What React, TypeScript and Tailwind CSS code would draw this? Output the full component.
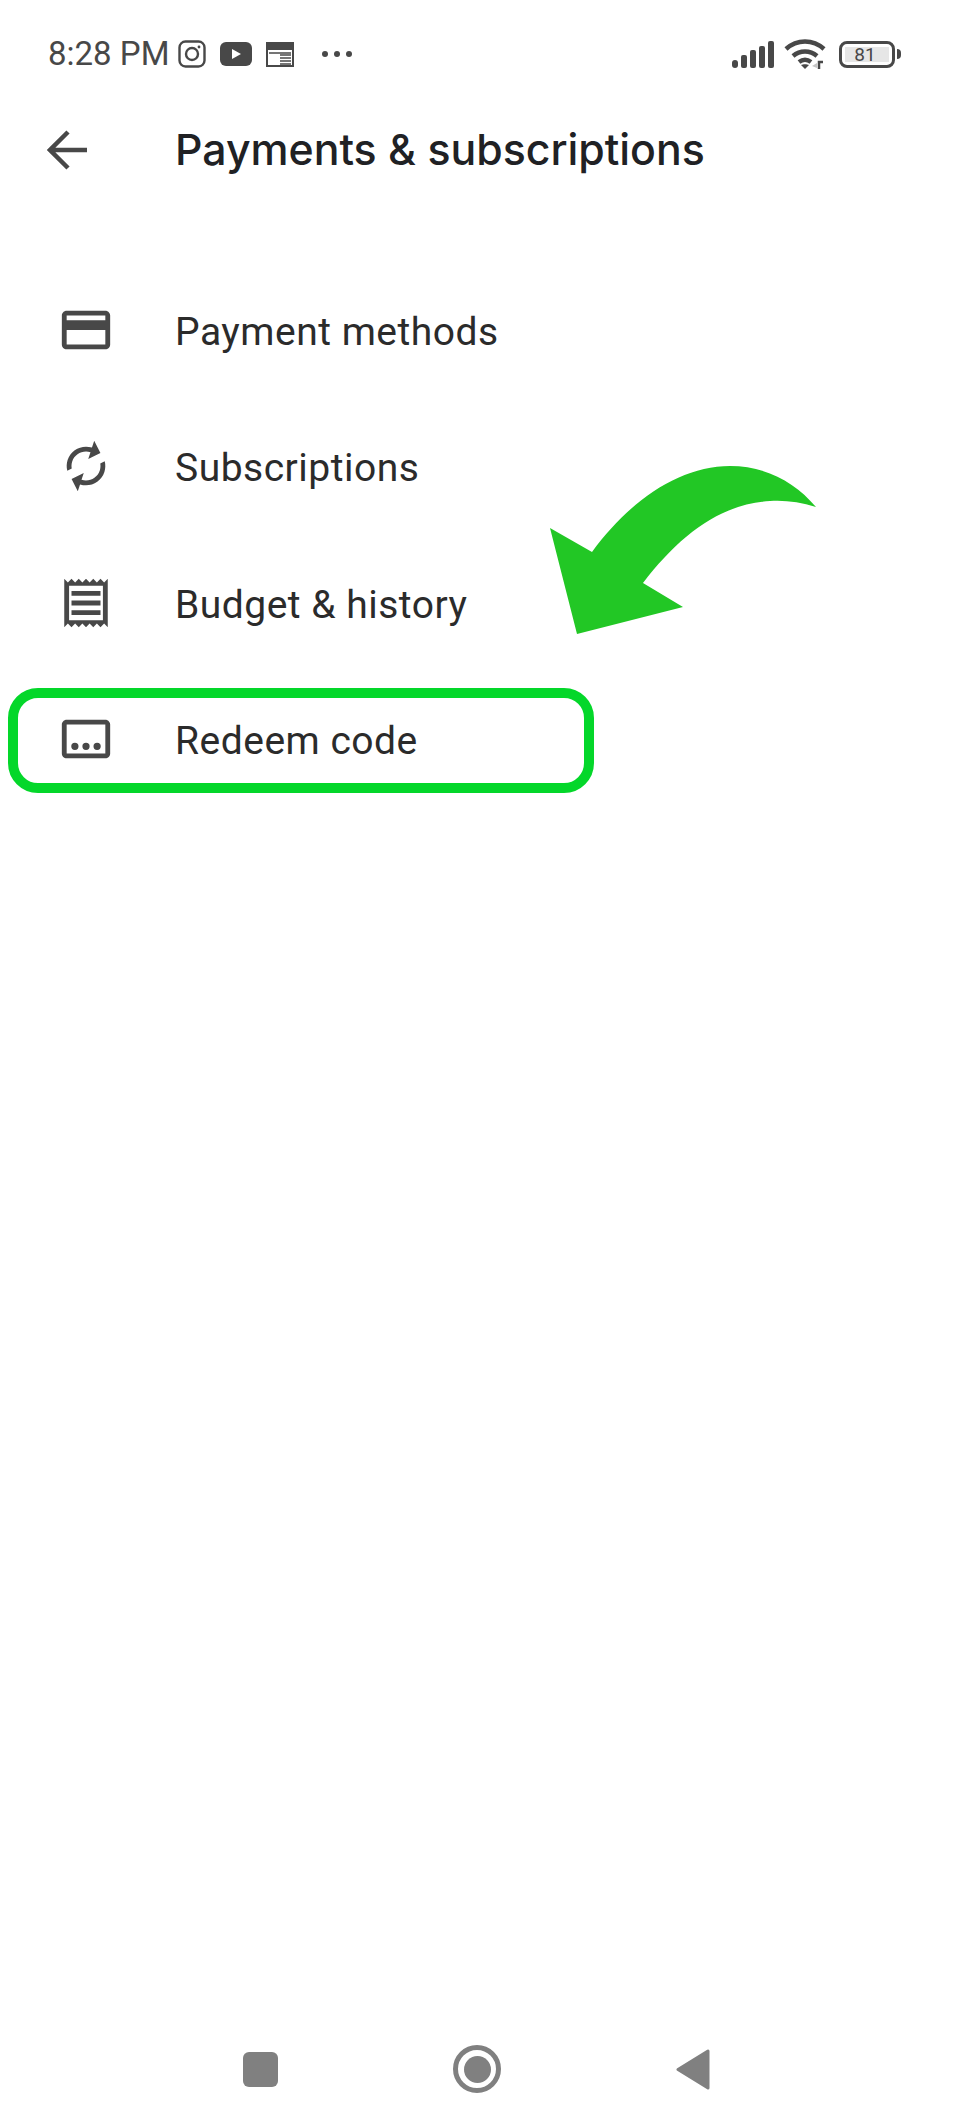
import React from "react";

const rows = [
  {
    label: "Payment methods",
    icon: <path d="M20 4H4c-1.11 0-1.99.89-1.99 2L2 18c0 1.11.89 2 2 2h16c1.11 0 2-.89 2-2V6c0-1.11-.89-2-2-2zm0 14H4v-6h16v6zm0-10H4V6h16v2z" />,
  },
  {
    label: "Subscriptions",
    icon: (
      <path
        transform="rotate(18 12 12)"
        d="M12 6v3l4-4-4-4v3c-4.42 0-8 3.58-8 8 0 1.57.46 3.03 1.24 4.26L6.7 14.8c-.45-.83-.7-1.79-.7-2.8 0-3.31 2.69-6 6-6zm6.76 1.74L17.3 9.2c.44.84.7 1.79.7 2.8 0 3.31-2.69 6-6 6v-3l-4 4 4 4v-3c4.42 0 8-3.58 8-8 0-1.57-.46-3.03-1.24-4.26z"
      />
    ),
  },
  {
    label: "Budget & history",
    icon: <path d="M18 17H6v-2h12v2zm0-4H6v-2h12v2zm0-4H6V7h12v2zM3 22l1.5-1.5L6 22l1.5-1.5L9 22l1.5-1.5L12 22l1.5-1.5L15 22l1.5-1.500L18 22l1.500-1.500L21 22V2l-1.500 1.500L18 2l-1.500 1.500L15 2l-1.500 1.500L12 2l-1.500 1.500L9 2 7.500 3.500 6 2 4.500 3.500 3 2v20zm2-2.900V4.900h14v14.200H5z" />,
  },
  {
    label: "Redeem code",
    icon: <path d="M20 4H4c-1.100 0-2 .9-2 2v12c0 1.100.9 2 2 2h16c1.100 0 2-.9 2-2V6c0-1.100-.9-2-2-2zm0 14H4V6h16v12zM5.900 15a1.500 1.500 0 1 0 3 0 1.500 1.500 0 1 0-3 0zm4.600 0a1.500 1.500 0 1 0 3 0 1.500 1.500 0 1 0-3 0zm4.600 0a1.500 1.500 0 1 0 3 0 1.500 1.500 0 1 0-3 0z" />,
  },
];

function StatusBar() {
  return (
    <div className="flex h-[108px] items-start justify-between pl-12 pr-[53px] pt-[38px] text-[#484848]">
      <div className="flex items-center">
        <span className="text-[33px] leading-[32px] font-[Roboto,sans-serif]">8:28 PM</span>
        <svg width="28" height="28" viewBox="0 0 28 28" fill="none" stroke="#484848" strokeWidth="2.4" className="ml-[9px]">
          <rect x="1.500" y="1.500" width="25" height="25" rx="6" />
          <circle cx="14" cy="14" r="6" />
          <circle cx="21" cy="7" r="1.400" fill="#484848" stroke="none" />
        </svg>
        <svg width="32" height="24" viewBox="0 0 32 24" className="ml-[14px]">
          <rect width="32" height="24" rx="6" fill="#484848" />
          <path d="M12 7l9 5-9 5z" fill="#fff" />
        </svg>
        <svg width="28" height="25" viewBox="0 0 28 25" className="ml-[14px]">
          <path d="M1 1h26v23H1z" fill="none" stroke="#484848" strokeWidth="2" />
          <path d="M1 1h26v7H1z" fill="#484848" />
          <path d="M3 12h9v10H3z" fill="#fff" />
          <path d="M14 13h11M14 16h11M14 19h11M14 22h11M3 11h22" stroke="#484848" strokeWidth="1.500" />
        </svg>
        <div className="ml-7 flex gap-[6px]">
          <span className="h-[6px] w-[6px] rounded-full bg-[#484848]" />
          <span className="h-[6px] w-[6px] rounded-full bg-[#484848]" />
          <span className="h-[6px] w-[6px] rounded-full bg-[#484848]" />
        </div>
      </div>
      <div className="flex items-center pt-px">
        <svg width="42" height="27" viewBox="0 0 42 27" fill="#484848">
          <rect x="0" y="19" width="6" height="8" rx="3" />
          <rect x="9" y="14" width="6" height="13" rx="2" />
          <rect x="18" y="9" width="6" height="18" rx="2" />
          <rect x="27" y="5" width="6" height="22" rx="2" />
          <rect x="36" y="0" width="6" height="27" rx="2" />
        </svg>
        <svg width="42" height="30" viewBox="0 0 42 30" fill="none" stroke="#484848" strokeWidth="4.500" className="ml-[10px]">
          <path d="M2 10c11-10 27-10 38 0" />
          <path d="M9 17c7-6 17-6 24 0" />
          <path d="M15 23c4-3 8-3 12 0" />
          <path d="M21 30l-4-4c2-1 6-1 8 0z" fill="#484848" stroke="none" />
          <path d="M33 29v-5l-5 3z" fill="#c4c4c4" stroke="none" />
          <path d="M35 30v-7h4" strokeWidth="2.500" />
        </svg>
        <div className="ml-[13px] flex h-[27px] w-[56px] items-center justify-center rounded-[8px] border-[3px] border-[#484848] p-[3px]">
          <div className="flex h-full w-full items-center justify-center bg-[#e6e6e6] pr-1 text-[19px] leading-none font-[Roboto,sans-serif]">81</div>
        </div>
        <div className="ml-[2px] h-[10px] w-[4px] rounded-r-sm bg-[#484848]" />
      </div>
    </div>
  );
}

export default function App() {
  return (
    <div className="relative flex h-[2126px] w-[954px] flex-col overflow-hidden bg-white font-[Roboto,sans-serif]">
      <StatusBar />

      <div className="flex h-[84px] items-center">
        <div className="flex w-[175px] pl-[47px]">
          <svg width="40" height="40" viewBox="0 0 40 40" fill="none" stroke="#484848" strokeWidth="4.500">
            <path d="M40 20H4M21 2L3 20l18 18" />
          </svg>
        </div>
        <h1 className="pt-px text-[42.800px] leading-none font-[Inter,sans-serif] font-medium text-[#202124]">Payments &amp; subscriptions</h1>
      </div>

      <div className="mt-[72px]">
        {rows.map((row) => (
          <div key={row.label} className="flex h-[136.5px] items-center">
            <div className="flex w-[175px] pb-[5px] pl-[57px]">
              <svg width="58" height="58" viewBox="0 0 24 24" fill="#484848">
                {row.icon}
              </svg>
            </div>
            <span className="text-[39px] leading-none font-normal tracking-[0.5px] text-[#2b2b2b]">{row.label}</span>
          </div>
        ))}
      </div>

      <div className="mt-auto flex h-[80px] items-center pb-[2px] pl-[243px]">
        <div className="h-[35px] w-[35px] rounded-[6px] bg-[#808080]" />
        <div className="ml-[175px] flex h-12 w-12 items-center justify-center rounded-full border-[5px] border-[#808080]">
          <div className="h-[27px] w-[27px] rounded-full bg-[#808080]" />
        </div>
        <svg width="34" height="41" viewBox="0 0 34 41" className="ml-[175px]">
          <path d="M32 2v37L2 20.500z" fill="#808080" stroke="#808080" strokeWidth="3" strokeLinejoin="round" />
        </svg>
      </div>
      <div className="h-[16px]" />

      {/* annotation drawn over the screenshot */}
      <div className="absolute top-[688px] left-[8px] h-[105px] w-[586px] rounded-[30px] border-[10px] border-[#04d72a]" />
      <svg className="absolute top-[460px] left-[545px]" width="280" height="180" viewBox="545 460 280 180">
        <path d="M550 528L592 552C630 500 680 466 730 466C765 466 795 482 816 507C800 502 785 500 770 501C720 504 680 535 643 583L683 607L577 634Z" fill="#22c725" />
      </svg>
    </div>
  );
}
